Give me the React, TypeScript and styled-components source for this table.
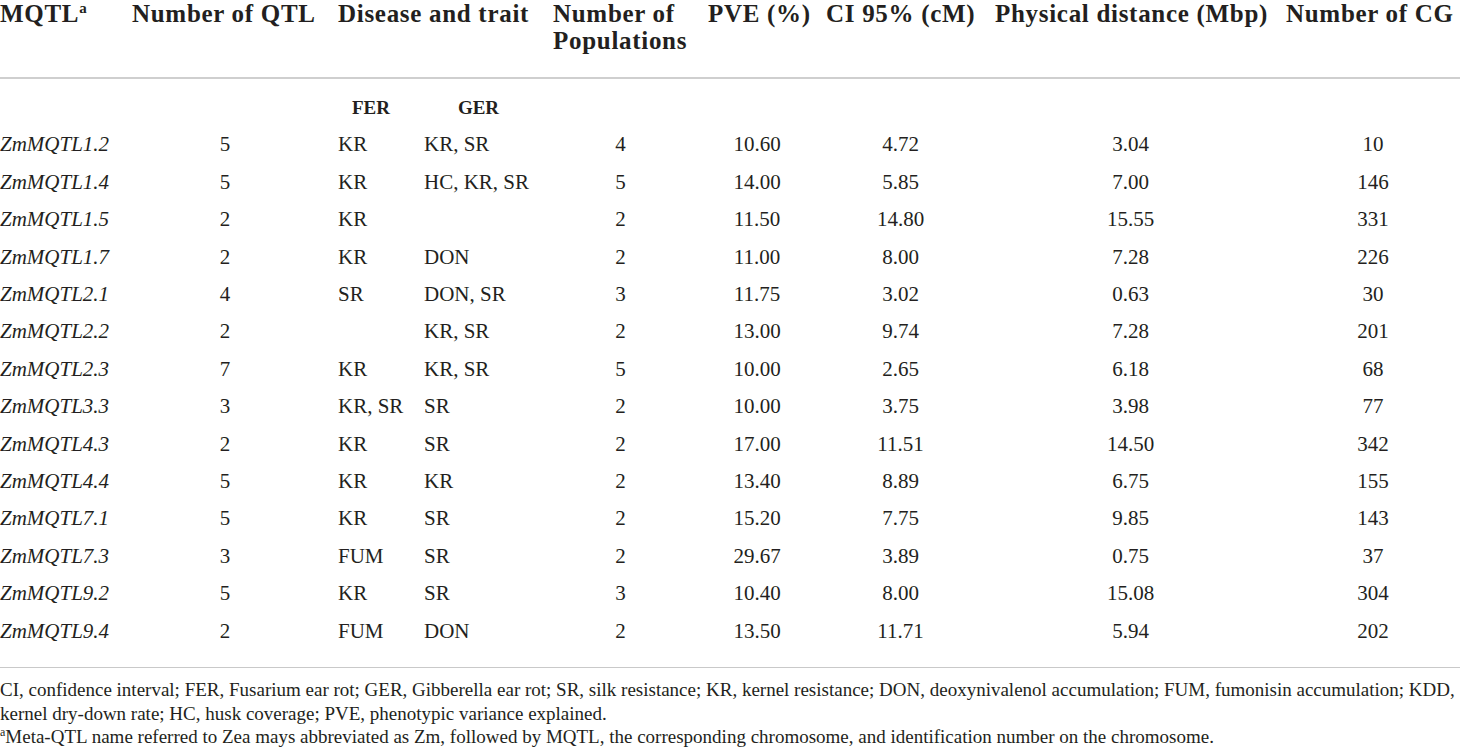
import React from "react";
import styled, { createGlobalStyle } from "styled-components";

const GlobalStyle = createGlobalStyle`
  html, body {
    margin: 0;
    padding: 0;
    background: #ffffff;
  }
  body {
    font-family: "Liberation Serif", "Times New Roman", serif;
    color: #231f20;
  }
`;

type Row = {
  name: string;
  qtl: number;
  fer: string;
  ger: string;
  pops: number;
  pve: string;
  ci: string;
  dist: string;
  cg: number;
};

const rows: Row[] = [
  { name: "ZmMQTL1.2", qtl: 5, fer: "KR", ger: "KR, SR", pops: 4, pve: "10.60", ci: "4.72", dist: "3.04", cg: 10 },
  { name: "ZmMQTL1.4", qtl: 5, fer: "KR", ger: "HC, KR, SR", pops: 5, pve: "14.00", ci: "5.85", dist: "7.00", cg: 146 },
  { name: "ZmMQTL1.5", qtl: 2, fer: "KR", ger: "", pops: 2, pve: "11.50", ci: "14.80", dist: "15.55", cg: 331 },
  { name: "ZmMQTL1.7", qtl: 2, fer: "KR", ger: "DON", pops: 2, pve: "11.00", ci: "8.00", dist: "7.28", cg: 226 },
  { name: "ZmMQTL2.1", qtl: 4, fer: "SR", ger: "DON, SR", pops: 3, pve: "11.75", ci: "3.02", dist: "0.63", cg: 30 },
  { name: "ZmMQTL2.2", qtl: 2, fer: "", ger: "KR, SR", pops: 2, pve: "13.00", ci: "9.74", dist: "7.28", cg: 201 },
  { name: "ZmMQTL2.3", qtl: 7, fer: "KR", ger: "KR, SR", pops: 5, pve: "10.00", ci: "2.65", dist: "6.18", cg: 68 },
  { name: "ZmMQTL3.3", qtl: 3, fer: "KR, SR", ger: "SR", pops: 2, pve: "10.00", ci: "3.75", dist: "3.98", cg: 77 },
  { name: "ZmMQTL4.3", qtl: 2, fer: "KR", ger: "SR", pops: 2, pve: "17.00", ci: "11.51", dist: "14.50", cg: 342 },
  { name: "ZmMQTL4.4", qtl: 5, fer: "KR", ger: "KR", pops: 2, pve: "13.40", ci: "8.89", dist: "6.75", cg: 155 },
  { name: "ZmMQTL7.1", qtl: 5, fer: "KR", ger: "SR", pops: 2, pve: "15.20", ci: "7.75", dist: "9.85", cg: 143 },
  { name: "ZmMQTL7.3", qtl: 3, fer: "FUM", ger: "SR", pops: 2, pve: "29.67", ci: "3.89", dist: "0.75", cg: 37 },
  { name: "ZmMQTL9.2", qtl: 5, fer: "KR", ger: "SR", pops: 3, pve: "10.40", ci: "8.00", dist: "15.08", cg: 304 },
  { name: "ZmMQTL9.4", qtl: 2, fer: "FUM", ger: "DON", pops: 2, pve: "13.50", ci: "11.71", dist: "5.94", cg: 202 },
];

// column widths include the 20px right padding of each cell
const colWidths = [132, 206, 86, 129, 155, 118, 169, 291, 174];

export default function App(): JSX.Element {
  return (
    <Page>
      <GlobalStyle />
      <Table>
        <colgroup>
          {colWidths.map((w, i) => (
            <col key={i} style={{ width: w }} />
          ))}
        </colgroup>
        <thead>
          <HeadRow>
            <Th>
              MQTL<Sup>a</Sup>
            </Th>
            <Th>Number of QTL</Th>
            <Th colSpan={2}>Disease and trait</Th>
            <Th>
              Number of
              <br />
              Populations
            </Th>
            <Th>PVE (%)</Th>
            <Th>CI 95% (cM)</Th>
            <Th>Physical distance (Mbp)</Th>
            <Th>Number of CG</Th>
          </HeadRow>
        </thead>
        <tbody>
          <SubRow>
            <Td />
            <Td />
            <SubTh>FER</SubTh>
            <SubTh>GER</SubTh>
            <Td />
            <Td />
            <Td />
            <Td />
            <Td />
          </SubRow>
          {rows.map((r) => (
            <BodyRow key={r.name}>
              <NameCell>{r.name}</NameCell>
              <Td $center>{r.qtl}</Td>
              <Td>{r.fer}</Td>
              <Td>{r.ger}</Td>
              <Td $center>{r.pops}</Td>
              <Td $center>{r.pve}</Td>
              <Td $center>{r.ci}</Td>
              <Td $center>{r.dist}</Td>
              <Td $center>{r.cg}</Td>
            </BodyRow>
          ))}
        </tbody>
      </Table>
      <Notes>
        <p>
          CI, confidence interval; FER, Fusarium ear rot; GER, Gibberella ear rot; SR, silk resistance; KR, kernel
          resistance; DON, deoxynivalenol accumulation; FUM, fumonisin accumulation; KDD, kernel dry-down rate; HC,
          husk coverage; PVE, phenotypic variance explained.
        </p>
        <p>
          <NoteSup>a</NoteSup>Meta-QTL name referred to Zea mays abbreviated as Zm, followed by MQTL, the corresponding
          chromosome, and identification number on the chromosome.
        </p>
      </Notes>
    </Page>
  );
}

const Page = styled.div`
  width: 1460px;
  height: 752px;
  overflow: hidden;
`;

const Table = styled.table`
  width: 1460px;
  table-layout: fixed;
  border-collapse: collapse;
  border-bottom: 1px solid #c9c9c9;
`;

const HeadRow = styled.tr`
  border-bottom: 2px solid #cfcfcf;
`;

const Th = styled.th`
  text-align: left;
  vertical-align: top;
  padding: 0 20px 23px 0;
  font-size: 25px;
  line-height: 27px;
  letter-spacing: 0.7px;
  font-weight: 700;
  white-space: nowrap;

  &:last-child {
    padding-right: 0;
  }
`;

const Sup = styled.sup`
  font-size: 15px;
  line-height: 0;
  letter-spacing: 0;
  vertical-align: 9px;
`;

const SubRow = styled.tr`
  td,
  th {
    padding-top: 10px;
  }
`;

const SubTh = styled.th`
  text-align: center;
  padding: 0 20px 0 0;
  font-size: 19px;
  line-height: 37.4px;
  font-weight: 700;
`;

const Td = styled.td<{ $center?: boolean }>`
  text-align: ${(p) => (p.$center ? "center" : "left")};
  padding: 0 20px 0 0;
  font-size: 21px;
  line-height: 37.4px;
  white-space: nowrap;

  &:last-child {
    padding-right: 0;
  }
`;

const NameCell = styled(Td)`
  font-style: italic;
`;

const BodyRow = styled.tr`
  &:last-child td {
    padding-bottom: 17px;
  }
`;

const Notes = styled.div`
  padding-top: 10px;
  font-size: 19px;
  line-height: 23.5px;

  p {
    margin: 0;
  }
`;

const NoteSup = styled.sup`
  font-size: 12px;
  line-height: 0;
  vertical-align: 7px;
`;
